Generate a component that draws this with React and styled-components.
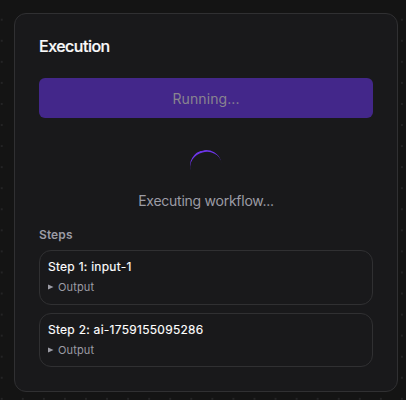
import React from "react";
import styled, { createGlobalStyle } from "styled-components";

const GlobalStyle = createGlobalStyle`
  *, *::before, *::after { box-sizing: border-box; }
  body {
    margin: 0;
    background: #141414;
    font-family: Inter, "Liberation Sans", sans-serif;
    overflow: hidden;
  }
`;

const Canvas = styled.main`
  width: 406px;
  height: 400px;
  padding: 13px 8px 8px 14px;
  background-color: #141414;
  background-image: radial-gradient(circle, #242425 0.8px, transparent 1.2px);
  background-size: 21.07px 21.07px;
  background-position: -8.8px -11.9px;
`;

const Card = styled.section`
  display: flex;
  flex-direction: column;
  height: 379px;
  padding: 20px 24px 24px;
  background: #19191b;
  border: 1px solid #303032;
  border-radius: 12px;
`;

const Title = styled.h2`
  margin: 0 0 20px;
  color: #fafafa;
  font-size: 16px;
  line-height: 24px;
  font-weight: 500;
  letter-spacing: -0.5px;
  -webkit-text-stroke: 0.2px currentColor;
`;

const RunButton = styled.button`
  flex: none;
  height: 40px;
  padding: 2px 0 0;
  border: 0;
  border-radius: 6px;
  background: #43278a;
  color: #89848f;
  font-family: inherit;
  font-size: 14px;
  line-height: 20px;
  letter-spacing: 0.1px;
`;

const Progress = styled.div`
  display: flex;
  flex-direction: column;
  align-items: center;
  gap: 9px;
  margin-top: 32px;
`;

const Spinner = styled.div`
  width: 32px;
  height: 32px;
  border-radius: 50%;
  border-top: 2.5px solid #6d35e8;
  transform: rotate(-14deg);
`;

const Status = styled.p`
  margin: 0;
  color: #9c9ca5;
  font-size: 14px;
  line-height: 20px;
  letter-spacing: -0.25px;
`;

const StepsTitle = styled.h3`
  margin: 16px 0 7px;
  color: #9c9ca5;
  font-size: 12px;
  line-height: 16px;
  font-weight: 600;
  letter-spacing: 0.1px;
`;

const StepList = styled.div`
  display: flex;
  flex-direction: column;
  gap: 8px;
`;

const Step = styled.article`
  height: ${({ $height }) => $height}px;
  padding: 8px;
  border: 1px solid #303032;
  border-radius: 12px;
`;

const StepName = styled.div`
  color: #ffffff;
  font-size: 12px;
  line-height: 16px;
  font-weight: 400;
  letter-spacing: 0.28px;
  -webkit-text-stroke: 0.15px currentColor;
`;

const Output = styled.div`
  display: flex;
  align-items: center;
  gap: 4px;
  margin-top: 4px;
  color: #9c9ca5;
  font-size: 11px;
  line-height: 16px;
  letter-spacing: 0.15px;
`;

const Marker = styled.svg`
  width: 6px;
  height: 6px;
  fill: currentColor;
`;

const steps = [
  { name: "Step 1: input-1", height: 55 },
  { name: "Step 2: ai-1759155095286", height: 54 },
];

export default function App() {
  return (
    <>
      <GlobalStyle />
      <Canvas>
        <Card>
          <Title>Execution</Title>
          <RunButton disabled>Running...</RunButton>
          <Progress>
            <Spinner />
            <Status>Executing workflow...</Status>
          </Progress>
          <StepsTitle>Steps</StepsTitle>
          <StepList>
            {steps.map((step) => (
              <Step key={step.name} $height={step.height}>
                <StepName>{step.name}</StepName>
                <Output>
                  <Marker viewBox="0 0 6 6"><path d="M0 .5 5.5 3 0 5.5Z" /></Marker>
                  Output
                </Output>
              </Step>
            ))}
          </StepList>
        </Card>
      </Canvas>
    </>
  );
}
